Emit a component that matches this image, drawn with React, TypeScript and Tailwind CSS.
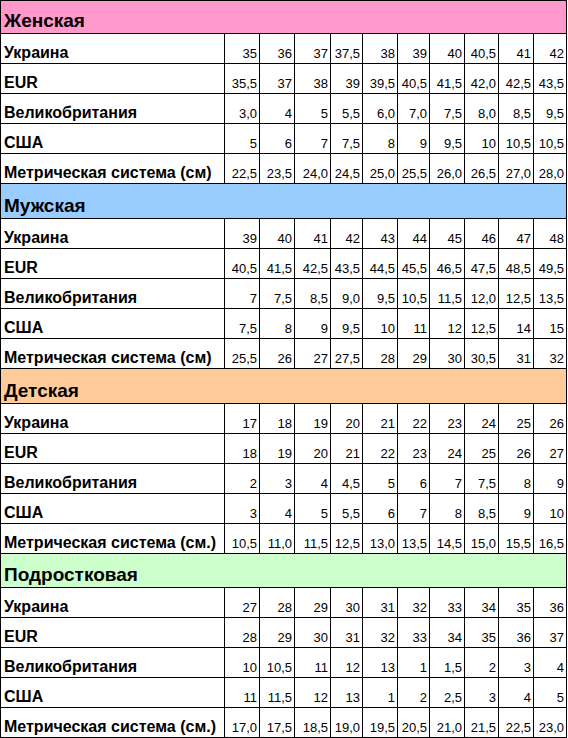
import React from 'react';

type Section = {
    title: string;
    bg: string;
    headerH: string;
    rows: [string, string[]][];
};

const sections: Section[] = [
    {
        title: 'Женская',
        bg: 'bg-[#ff99cc]',
        headerH: 'h-[32px]',
        rows: [
            ['Украина', ['35', '36', '37', '37,5', '38', '39', '40', '40,5', '41', '42']],
            ['EUR', ['35,5', '37', '38', '39', '39,5', '40,5', '41,5', '42,0', '42,5', '43,5']],
            ['Великобритания', ['3,0', '4', '5', '5,5', '6,0', '7,0', '7,5', '8,0', '8,5', '9,5']],
            ['США', ['5', '6', '7', '7,5', '8', '9', '9,5', '10', '10,5', '10,5']],
            ['Метрическая система (см)', ['22,5', '23,5', '24,0', '24,5', '25,0', '25,5', '26,0', '26,5', '27,0', '28,0']],
        ],
    },
    {
        title: 'Мужская',
        bg: 'bg-[#99ccff]',
        headerH: 'h-[34px]',
        rows: [
            ['Украина', ['39', '40', '41', '42', '43', '44', '45', '46', '47', '48']],
            ['EUR', ['40,5', '41,5', '42,5', '43,5', '44,5', '45,5', '46,5', '47,5', '48,5', '49,5']],
            ['Великобритания', ['7', '7,5', '8,5', '9,0', '9,5', '10,5', '11,5', '12,0', '12,5', '13,5']],
            ['США', ['7,5', '8', '9', '9,5', '10', '11', '12', '12,5', '14', '15']],
            ['Метрическая система (см)', ['25,5', '26', '27', '27,5', '28', '29', '30', '30,5', '31', '32']],
        ],
    },
    {
        title: 'Детская',
        bg: 'bg-[#ffcc99]',
        headerH: 'h-[34px]',
        rows: [
            ['Украина', ['17', '18', '19', '20', '21', '22', '23', '24', '25', '26']],
            ['EUR', ['18', '19', '20', '21', '22', '23', '24', '25', '26', '27']],
            ['Великобритания', ['2', '3', '4', '4,5', '5', '6', '7', '7,5', '8', '9']],
            ['США', ['3', '4', '5', '5,5', '6', '7', '8', '8,5', '9', '10']],
            ['Метрическая система (см.)', ['10,5', '11,0', '11,5', '12,5', '13,0', '13,5', '14,5', '15,0', '15,5', '16,5']],
        ],
    },
    {
        title: 'Подростковая',
        bg: 'bg-[#ccffcc]',
        headerH: 'h-[33px]',
        rows: [
            ['Украина', ['27', '28', '29', '30', '31', '32', '33', '34', '35', '36']],
            ['EUR', ['28', '29', '30', '31', '32', '33', '34', '35', '36', '37']],
            ['Великобритания', ['10', '10,5', '11', '12', '13', '1', '1,5', '2', '3', '4']],
            ['США', ['11', '11,5', '12', '13', '1', '2', '2,5', '3', '4', '5']],
            ['Метрическая система (см.)', ['17,0', '17,5', '18,5', '19,0', '19,5', '20,5', '21,0', '21,5', '22,5', '23,0']],
        ],
    },
];

export default function App() {
    return (
        <div className="bg-white w-[568px] h-[738px] overflow-hidden font-['Liberation_Sans',Arial,sans-serif] text-black">
            {/* Size chart grid: black gaps act as cell borders */}
            <div className="grid w-[567px] grid-cols-[223px_34px_34px_35px_31px_34px_31px_34px_33px_34px_32px] gap-px bg-black p-px">
                {sections.map((section) => (
                    <React.Fragment key={section.title}>
                        <div
                            className={`col-span-11 ${section.headerH} ${section.bg} flex items-end pl-[3px] pb-[3px] text-[19px] font-bold leading-none`}
                        >
                            {section.title}
                        </div>
                        {section.rows.map(([label, values]) => (
                            <React.Fragment key={section.title + label}>
                                <div className="h-[29px] bg-white flex items-end pl-[3px] pb-[2px] text-[16px] font-bold leading-none whitespace-nowrap">
                                    {label}
                                </div>
                                {values.map((v, i) => (
                                    <div
                                        key={i}
                                        className="h-[29px] bg-white flex items-end justify-end pr-[2px] pb-[3px] text-[13px] leading-none"
                                    >
                                        {v}
                                    </div>
                                ))}
                            </React.Fragment>
                        ))}
                    </React.Fragment>
                ))}
            </div>
        </div>
    );
}
